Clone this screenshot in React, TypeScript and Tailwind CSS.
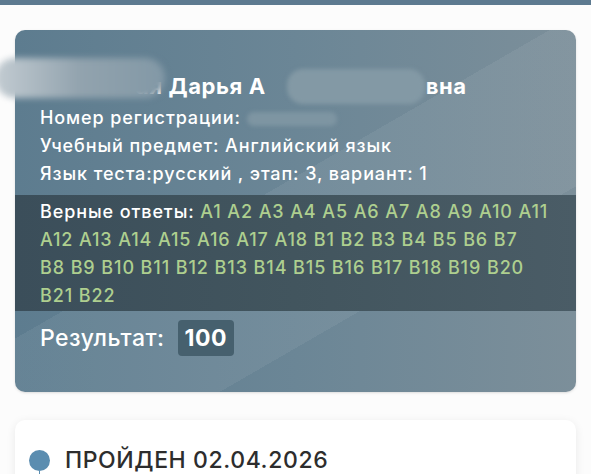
import React from 'react';

const a = (from: number, to: number, p: string) =>
  Array.from({ length: to - from + 1 }, (_, i) => `${p}${from + i}`);

// answer rows as they wrap on the device
const rows = [
  a(1, 11, 'A'),
  [...a(12, 18, 'A'), ...a(1, 7, 'B')],
  a(8, 20, 'B'),
  a(21, 22, 'B'),
];

const App: React.FC = () => {
  return (
    <div className="relative w-[591px] h-[474px] overflow-hidden bg-[#fcfcfc] font-['Inter','Liberation_Sans',sans-serif]">
      <div className="h-[5px] bg-[#5d7a90]" />

      <div className="px-[15px] pt-[25px]">
        {/* result card */}
        <div className="relative overflow-hidden rounded-[10px] bg-gradient-to-r from-[#5d7c8f] via-[#6b8696] to-[#7c8f9a] shadow-sm">
          <div className="absolute inset-0 bg-[linear-gradient(150deg,transparent_45%,rgba(255,255,255,0.06)_45%,rgba(255,255,255,0.06)_70%,transparent_70%)]" />

          <div className="relative px-[25px] pt-[41px] text-white">
            <div className="text-[22px] font-bold leading-[30px] pl-[96px] tracking-[0.6px]">
              ая Дарья А<span className="inline-block w-[160px]" />вна
            </div>
            <div className="text-[18px] font-medium leading-[28px] mt-[3px] tracking-[0.9px]">
              <div>
                Номер регистрации: <span className="inline-block w-[90px] align-middle h-[14px] rounded-full bg-[#7e95a2] blur-[2px]" />
              </div>
              <div>Учебный предмет: Английский язык</div>
              <div>Язык теста:русский , этап: 3, вариант: 1</div>
            </div>
          </div>

          <div className="relative mt-[7px] bg-gradient-to-r from-[#3b4e5a] via-[#42555e] to-[#4a5c66] px-[25px] pt-[3px] pb-[1px] text-[18px] font-medium leading-[28px] tracking-[0.9px] whitespace-nowrap">
            {rows.map((r, i) => (
              <div key={i}>
                {i === 0 && <span className="text-white">Верные ответы: </span>}
                <span className="text-[#aecf8f]">{r.join(' ')}</span>
              </div>
            ))}
          </div>

          <div className="relative flex items-center gap-[13px] px-[25px] pt-[9px] pb-[36px]">
            <span className="text-[23px] font-medium tracking-[0.5px] text-white">Результат:</span>
            <span className="rounded-[4px] bg-[#46606e] px-[7px] py-[3px] text-[23px] font-bold leading-[30px] tracking-[0.5px] text-white">100</span>
          </div>
        </div>

        {/* status card */}
        <div className="mt-[28px] h-[80px] rounded-[10px] bg-white shadow-[0_2px_10px_rgba(0,0,0,0.08)] px-[14px] pt-[25px]">
          <div className="flex items-center gap-[15px]">
            <div className="relative">
              <div className="h-[21px] w-[21px] rounded-full bg-[#5b8db0]" />
              <div className="absolute left-[10px] top-[21px] h-[10px] w-[1px] bg-[#5b8db0]" />
            </div>
            <span className="text-[23px] font-medium leading-[30px] tracking-[0.6px] text-[#2d2d2d]">ПРОЙДЕН 02.04.2026</span>
          </div>
        </div>
      </div>

      {/* redaction smudges */}
      <div className="absolute left-[-5px] top-[58px] h-[40px] w-[170px] rounded-[20px] bg-gradient-to-r from-[#c3ccd2] via-[#92a3ae] to-[#8298a6] blur-[3px]" />
      <div className="absolute left-[287px] top-[69px] h-[35px] w-[138px] rounded-[16px] bg-[#8399a5] blur-[2px]" />
    </div>
  );
};

export default App;
